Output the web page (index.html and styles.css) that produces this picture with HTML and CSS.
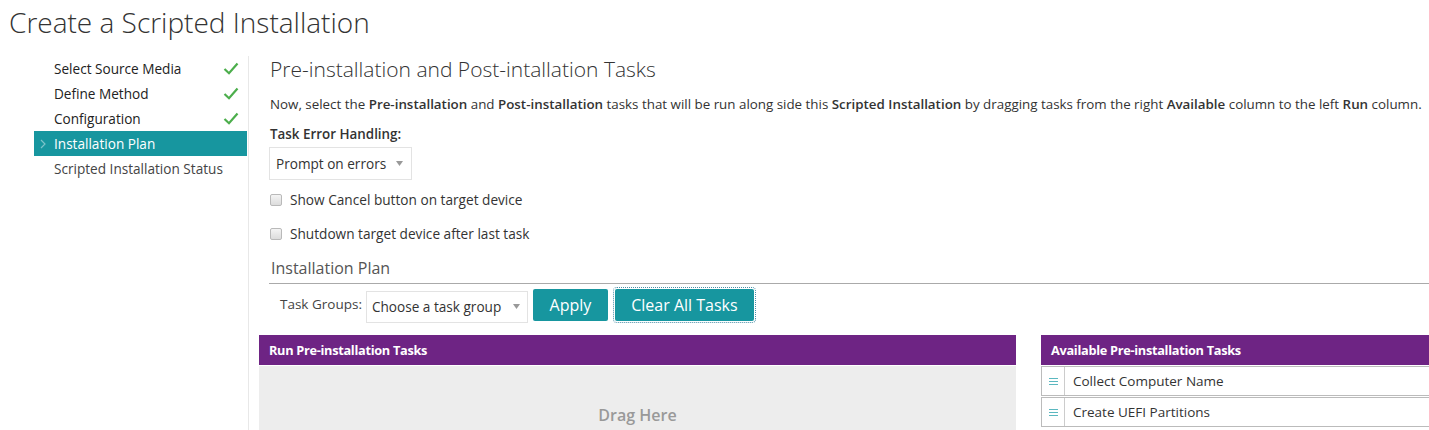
FILE: index.html
```html
<!DOCTYPE html>
<html lang="en">
<head>
<meta charset="utf-8">
<title>Create a Scripted Installation</title>
<link rel="stylesheet" href="styles.css">
</head>
<body>
<h1 class="page-title">Create a Scripted Installation</h1>
<div class="layout">
  <nav class="steps">
    <div class="step done"><span>Select Source Media</span><svg class="check" viewBox="0 0 16 13" width="16" height="13"><polyline points="1.5,7 6,11.2 14.5,1.5" fill="none" stroke="#4cae4c" stroke-width="2.2"/></svg></div>
    <div class="step done"><span>Define Method</span><svg class="check" viewBox="0 0 16 13" width="16" height="13"><polyline points="1.5,7 6,11.2 14.5,1.5" fill="none" stroke="#4cae4c" stroke-width="2.2"/></svg></div>
    <div class="step done"><span>Configuration</span><svg class="check" viewBox="0 0 16 13" width="16" height="13"><polyline points="1.5,7 6,11.2 14.5,1.5" fill="none" stroke="#4cae4c" stroke-width="2.2"/></svg></div>
    <div class="step active"><svg class="chev" viewBox="0 0 6 10" width="6" height="10"><polyline points="1,1 5,5 1,9" fill="none" stroke="#7cc3c9" stroke-width="1.2"/></svg><span>Installation Plan</span></div>
    <div class="step"><span>Scripted Installation Status</span></div>
  </nav>
  <main class="content">
    <h2 class="section-title">Pre-installation and Post-intallation Tasks</h2>
    <p class="intro">Now, select the <b>Pre-installation</b> and <b>Post-installation</b> tasks that will be run along side this <b>Scripted Installation</b> by dragging tasks from the right <b>Available</b> column to the left <b>Run</b> column.</p>
    <div class="field-label">Task Error Handling:</div>
    <div class="select error-select"><span>Prompt on errors</span><svg class="caret" viewBox="0 0 7 5" width="7" height="5"><polygon points="0,0 7,0 3.5,5" fill="#999"/></svg></div>
    <label class="check-row first"><input type="checkbox"><span>Show Cancel button on target device</span></label>
    <label class="check-row second"><input type="checkbox"><span>Shutdown target device after last task</span></label>
    <div class="plan-title">Installation Plan</div>
    <div class="toolbar">
      <span class="tg-label">Task Groups:</span>
      <div class="select group-select"><span>Choose a task group</span><svg class="caret" viewBox="0 0 7 5" width="7" height="5"><polygon points="0,0 7,0 3.5,5" fill="#999"/></svg></div>
      <button class="btn apply">Apply</button>
      <button class="btn clear">Clear All Tasks</button>
    </div>
    <div class="panels">
      <section class="panel run">
        <div class="panel-head">Run Pre-installation Tasks</div>
        <div class="drop">Drag Here</div>
      </section>
      <section class="panel avail">
        <div class="panel-head">Available Pre-installation Tasks</div>
        <div class="task"><span class="handle"><svg viewBox="0 0 9 7" width="9" height="7"><path d="M0 0.5H9M0 3.5H9M0 6.5H9" stroke="#5bb8c0" stroke-width="1"/></svg></span><span class="task-name">Collect Computer Name</span></div>
        <div class="task"><span class="handle"><svg viewBox="0 0 9 7" width="9" height="7"><path d="M0 0.5H9M0 3.5H9M0 6.5H9" stroke="#5bb8c0" stroke-width="1"/></svg></span><span class="task-name">Create UEFI Partitions</span></div>
      </section>
    </div>
  </main>
</div>
</body>
</html>
```
FILE: styles.css
```css
* { box-sizing: border-box; }
html, body { margin: 0; padding: 0; }
body {
  font-family: "Open Sans", "Noto Sans", sans-serif;
  color: #333;
  background: #fff;
  overflow: hidden;
  width: 1429px;
  height: 430px;
}
.page-title {
  margin: 0;
  padding-left: 9px;
  font-size: 28px;
  font-weight: 300;
  line-height: 44px;
  height: 44px;
  color: #333;
}
.layout {
  display: flex;
  margin-top: 12px;
  padding-left: 34px;
  height: 374px;
}
.steps {
  width: 215px;
  flex: none;
  border-right: 1px solid #e8e8e8;
}
.step {
  position: relative;
  height: 25px;
  line-height: 25px;
  padding-left: 20px;
  padding-right: 9px;
  font-size: 13.6px;
  display: flex;
  align-items: center;
  justify-content: space-between;
  color: #222;
}
.step.active {
  background: #17969f;
  color: #fff;
  margin-right: 1px;
}
.step .check { margin-top: -1px; }
.step .chev { position: absolute; left: 6px; top: 8px; }
.step:last-child { color: #444; }
.content {
  flex: 1;
  margin-left: 10px;
  min-width: 0;
}
.section-title {
  margin: 0;
  padding-left: 11px;
  font-size: 21px;
  font-weight: 300;
  line-height: 26px;
  color: #333;
}
.intro {
  margin: 12px 0 0;
  padding-left: 11px;
  font-size: 13.36px;
  line-height: 20px;
  white-space: nowrap;
  color: #333;
}
.intro b { font-weight: 600; }
.field-label {
  margin-top: 10px;
  padding-left: 11px;
  font-size: 13.4px;
  font-weight: 600;
  line-height: 20px;
}
.select {
  display: flex;
  align-items: center;
  justify-content: space-between;
  border: 1px solid #e3e3e3;
  background: #fff;
  font-size: 13.6px;
  color: #333;
}
.error-select {
  margin: 3px 0 0 10px;
  width: 143px;
  height: 33px;
  padding: 0 8px 0 6px;
}
.check-row {
  display: flex;
  align-items: center;
  gap: 8px;
  padding-left: 11px;
  font-size: 13.65px;
  line-height: 20px;
  color: #333;
}
.check-row.first { margin-top: 10px; }
.check-row.second { margin-top: 14px; }
.check-row input {
  -webkit-appearance: none;
  appearance: none;
  margin: 0;
  width: 12px;
  height: 12px;
  border: 1px solid #b9b9b9;
  border-radius: 2px;
  background: linear-gradient(#f4f4f4, #dcdcdc);
}
.plan-title {
  margin-top: 13px;
  margin-left: 10px;
  padding: 0 0 3px 2px;
  font-size: 16px;
  line-height: 23px;
  color: #555;
  border-bottom: 1px solid #aaa;
}
.toolbar {
  display: flex;
  align-items: center;
  height: 36px;
  margin-top: 3px;
  padding-left: 21px;
}
.tg-label { font-size: 13.5px; color: #444; margin-right: 4px; margin-top: -2px; }
.group-select {
  width: 162px;
  height: 32px;
  padding: 0 7px 0 5px;
  margin-top: 3px;
}
.btn {
  font-family: inherit;
  font-size: 16px;
  color: #fff;
  background: #17969f;
  border: 0;
  border-radius: 2px;
  height: 32px;
  padding: 0;
}
.apply { width: 75px; margin-left: 5px; }
.clear {
  width: 139px;
  margin-left: 7px;
  outline: 1px dotted #4a8fa8;
  outline-offset: 1px;
}
.panels {
  display: grid;
  grid-template-columns: 757px 400px;
  column-gap: 25px;
  margin-top: 12px;
}
.panel-head {
  background: #6e2484;
  color: #fff;
  font-size: 12.75px;
  font-weight: 700;
  letter-spacing: -0.3px;
  height: 30px;
  line-height: 30px;
  padding-left: 10px;
}
.drop {
  margin-top: 1px;
  height: 64px;
  background: #ededed;
  color: #999;
  font-size: 16px;
  font-weight: 600;
  text-align: center;
  padding-top: 38px;
  line-height: 22px;
}
.task {
  display: flex;
  height: 30px;
  margin-top: 1px;
  border: 1px solid #bbb;
  align-items: stretch;
}
.handle {
  width: 23px;
  border-right: 1px solid #ccc;
  display: flex;
  align-items: center;
  justify-content: center;
}
.task-name {
  display: flex;
  align-items: center;
  padding-left: 8px;
  font-size: 13.5px;
  color: #333;
}
```
